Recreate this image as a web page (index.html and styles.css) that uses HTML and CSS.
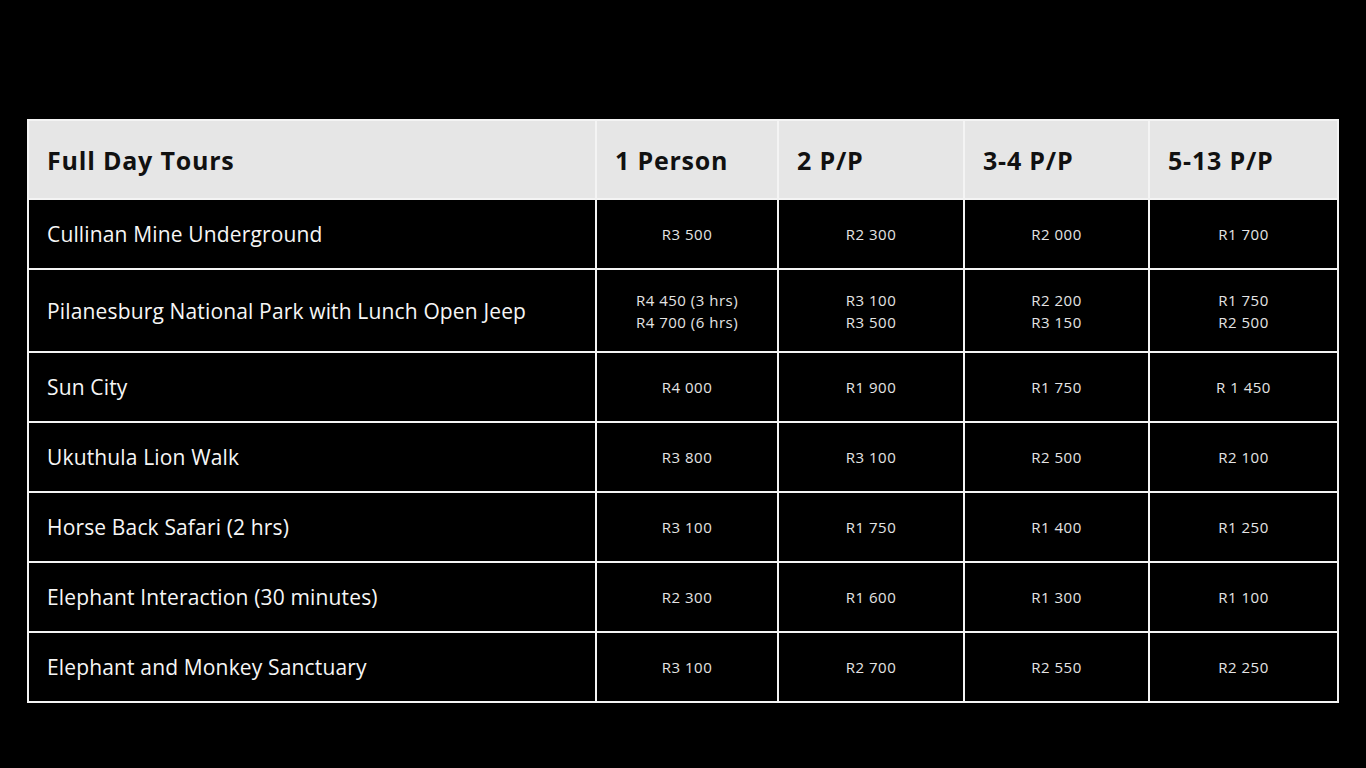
FILE: index.html
```html
<!DOCTYPE html>
<html>
<head>
<meta charset="utf-8">
<link rel="stylesheet" href="styles.css">
</head>
<body>
<div class="table">
  <div class="h first">Full Day Tours</div>
  <div class="h">1 Person</div>
  <div class="h">2 P/P</div>
  <div class="h">3-4 P/P</div>
  <div class="h">5-13 P/P</div>

  <div class="n">Cullinan Mine Underground</div>
  <div class="p">R3 500</div><div class="p">R2 300</div><div class="p">R2 000</div><div class="p">R1 700</div>

  <div class="n">Pilanesburg National Park with Lunch Open Jeep</div>
  <div class="p">R4 450 (3 hrs)<br>R4 700 (6 hrs)</div><div class="p">R3 100<br>R3 500</div><div class="p">R2 200<br>R3 150</div><div class="p">R1 750<br>R2 500</div>

  <div class="n">Sun City</div>
  <div class="p">R4 000</div><div class="p">R1 900</div><div class="p">R1 750</div><div class="p">R 1 450</div>

  <div class="n">Ukuthula Lion Walk</div>
  <div class="p">R3 800</div><div class="p">R3 100</div><div class="p">R2 500</div><div class="p">R2 100</div>

  <div class="n">Horse Back Safari (2 hrs)</div>
  <div class="p">R3 100</div><div class="p">R1 750</div><div class="p">R1 400</div><div class="p">R1 250</div>

  <div class="n">Elephant Interaction (30 minutes)</div>
  <div class="p">R2 300</div><div class="p">R1 600</div><div class="p">R1 300</div><div class="p">R1 100</div>

  <div class="n">Elephant and Monkey Sanctuary</div>
  <div class="p">R3 100</div><div class="p">R2 700</div><div class="p">R2 550</div><div class="p">R2 250</div>
</div>
</body>
</html>
```
FILE: styles.css
```css
html, body {
  margin: 0;
  padding: 0;
  background: #000;
  height: 100%;
}
body {
  padding: 119px 0 0 27px;
  box-sizing: border-box;
  font-family: "Open Sans", "DejaVu Sans", sans-serif;
}
.table {
  width: 1312px;
  box-sizing: border-box;
  display: grid;
  grid-template-columns: 566px 180px 184px 183px 187px;
  grid-template-rows: 77px 68px 81px 68px 68px 68px 68px 68px;
  gap: 2px;
  padding: 2px;
  background: #f4f4f4;
}
.table > div {
  display: flex;
  align-items: center;
  background: #000;
}
.h {
  background: #e6e6e6 !important;
  color: #111;
  font-weight: 700;
  font-size: 25px;
  letter-spacing: 0.8px;
  padding-left: 18px;
}
.n {
  color: #f6f6f6;
  font-size: 21px;
  letter-spacing: 0.15px;
  padding-left: 18px;
}
.p {
  color: #e4e4e4;
  font-size: 15px;
  letter-spacing: 0.5px;
  line-height: 22px;
  justify-content: center;
  text-align: center;
}
```
